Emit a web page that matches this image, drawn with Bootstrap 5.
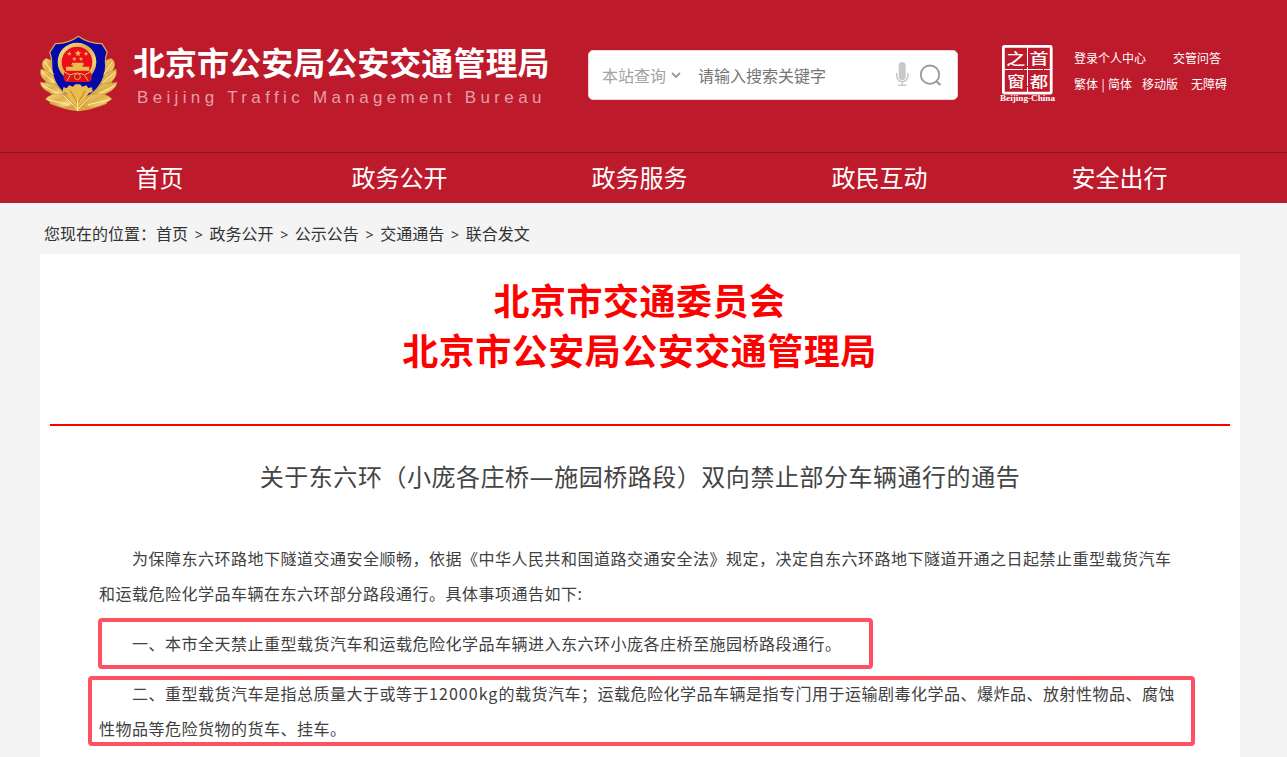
<!DOCTYPE html>
<html lang="zh-CN">
<head>
<meta charset="utf-8">
<meta name="viewport" content="width=device-width, initial-scale=1">
<title>北京市公安局公安交通管理局</title>
<link href="https://cdn.jsdelivr.net/npm/bootstrap@5.3.0/dist/css/bootstrap.min.css" rel="stylesheet">
<style>
  html, body { height: 100%; }
  body { background: #f4f4f4; color: #333; font-family: "Noto Sans CJK SC", sans-serif; font-size: 16px; overflow: hidden; padding-right: 7px; }
  a { color: inherit; text-decoration: none; }
  .page-width { width: 1200px; margin: 0 auto; }
  .site-top { background: #bd1a2c; margin-right: -7px; padding-right: 7px; height: 152px; }
  .site-nav { background: #bd1a2c; margin-right: -7px; padding-right: 7px; height: 51px; border-top: 1px solid #8f1220; }
  .site-nav a { flex: 0 0 240px; font-size: 24px; line-height: 48px; color: #fff; text-align: center; padding-right: 1px; }
  .emblem { margin-top: 35px; }
  .brand-text { margin: 38px 0 0 13px; width: 455px; color: #fff; white-space: nowrap; }
  .brand-text h1 { font-size: 32px; font-weight: 700; line-height: 47px; margin: 0 0 3px; letter-spacing: .04px; }
  .brand-text p { font: 17px/20px "Liberation Sans", Arial, sans-serif; letter-spacing: 4.35px; color: #e3a0a8; margin: 0 0 0 4px; }
  .search-box { width: 370px; height: 50px; margin-top: 50px; border-radius: 5px; border: 1px solid #e6d5d7; }
  .search-kind { color: #a3a3a3; margin-left: 13px; }
  .search-hint { color: #757575; margin-left: 16px; width: 197px; }
  .seal { margin: 44px 0 0 41px; }
  .tools { margin: 45px 0 0 18px; font-size: 12px; line-height: 26px; color: #fff; white-space: nowrap; }
  .crumbs { height: 51px; padding: 5px 0 0 4px; line-height: 51px; white-space: nowrap; }
  .crumbs i { font: 14px "Noto Sans", sans-serif; display: inline-block; width: 21.4px; text-align: center; }
  .sheet { height: 520px; padding: 20px 10px 0; }
  .issuer { color: #f00; font-size: 36px; font-weight: 700; line-height: 50px; letter-spacing: .5px; height: 152px; border-bottom: 2px solid #f00; text-align: center; margin: 0; padding-right: 1px; }
  .notice-title { color: #444; font-size: 24px; line-height: 36px; letter-spacing: .53px; text-align: center; margin: 32px 0 47px; height: 36px; }
  .notice-title .dash { font-family: "DejaVu Sans", sans-serif; }
  .notice { color: #404040; padding-left: 49px; line-height: 35px; letter-spacing: .5px; white-space: nowrap; }
  .notice p { margin: 0 0 15px; text-indent: 33px; position: relative; }
  .notice .latin { letter-spacing: 1.05px; }
  .outlined::before { content: ""; position: absolute; border: 4px solid #ff5162; border-radius: 4px; }
  .outline-one::before { left: -1px; top: -8px; width: 775px; height: 51px; }
  .outline-two::before { left: -11px; top: 0; width: 1107px; height: 70px; }
</style>
</head>
<body>
<header class="site-top">
  <div class="page-width d-flex align-items-start">
    <svg class="emblem flex-shrink-0" width="80" height="78" viewBox="31 30 240 234" aria-label="警徽">
      <defs>
        <linearGradient id="gold" x1="0" y1="0" x2="1" y2="1"><stop offset="0" stop-color="#f8df8c"/><stop offset=".45" stop-color="#dfad48"/><stop offset=".75" stop-color="#f3d67c"/><stop offset="1" stop-color="#c78c32"/></linearGradient>
      </defs>
      <path d="M54 112L74 110L146 200L219 110L240 112L248 170L226 205L232 236Q188 254 146 259Q104 254 60 236L66 205L46 170Z" fill="#dba845"/>
      <g fill="url(#gold)" stroke="#b98332" stroke-width="1.2">
        <path d="M50 100Q32 110 40 128Q52 150 74 158L64 106Z"/>
        <path d="M34 132Q28 152 46 167L82 184L68 146Z"/>
        <path d="M31 172Q36 194 66 206L108 214L78 178Z"/>
        <path d="M47 222Q66 201 103 209L136 245Q90 255 47 222Z"/>
        <path d="M244 100Q260 110 253 128Q242 150 220 158L230 106Z"/>
        <path d="M259 132Q265 152 248 167L212 184L226 146Z"/>
        <path d="M263 172Q258 194 228 206L186 214L216 178Z"/>
        <path d="M247 222Q228 201 191 209L158 245Q204 255 247 222Z"/>
      </g>
      <path d="M146 34Q116 57 77 56L60 82Q67 98 66 121C67 160 80 186 106 206L146 232L186 206C212 186 227 160 228 121Q225 98 233 82L217 56Q178 57 146 34Z" fill="#0609a8" stroke="#d9ad58" stroke-width="3.5"/>
      <circle cx="142" cy="111" r="52" fill="#ec0c1c" stroke="url(#gold)" stroke-width="12"/>
      <g fill="#e9bd4c">
        <path id="st" d="M145 75l3 7h7l-6 5 2 7-6-4-6 4 2-7-6-5h7z"/>
        <path id="sm" d="M119 79l2 5h5l-4 3 1 5-4-3-4 3 1-5-4-3h5z"/>
        <use href="#sm" x="50"/><use href="#sm" x="15" y="16"/><use href="#sm" x="35" y="16"/>
        <path d="M128 113h32l4 6h-5v6h20v12h-70v-12h20v-6h-5z"/>
      </g>
      <path d="M104 139q38 8 78 0l5 18q-2 10-8 14h-70q-7-5-8-14z" fill="#dd1020"/>
      <path d="M101 139l20 11q22-11 44 0l19-11M121 152l-9 15m54-15l9 15" fill="none" stroke="#efbe52" stroke-width="3"/>
      <circle cx="143" cy="155" r="9" fill="#dd1020" stroke="#e8ab43" stroke-width="3"/>
      <path d="M101 187l11 2 6-8 12 4 7-7h14l7 7 12-4 6 8 11-2 2 13-12 5-14 23-20 14-20-14-13-23-11-5z" fill="#e9bc50"/>
      <path d="M122 197l22 38 23-38" fill="none" stroke="#b77e25" stroke-width="3"/>
      <path d="M45 110l27 38M38 142l38 31M37 181l49 25M53 224l66 15M249 110l-27 38M256 142l-38 31M257 181l-49 25M241 224l-66 15M102 212l42 41 42-41M144 224v34" fill="none" stroke="#fff1a5" stroke-width="3"/>
    </svg>
    <div class="brand-text flex-shrink-0">
      <h1>北京市公安局公安交通管理局</h1>
      <p>Beijing Traffic Management Bureau</p>
    </div>
    <div class="search-box bg-white d-flex align-items-center flex-shrink-0">
      <span class="search-kind">本站查询</span>
      <svg class="ms-1" width="12" height="10" viewBox="0 0 12 10"><path d="M2 3l4 4 4-4" fill="none" stroke="#999" stroke-width="1.8"/></svg>
      <span class="search-hint">请输入搜索关键字</span>
      <svg width="14" height="26" viewBox="0 0 14 26"><rect x="3.7" y="0" width="7" height="18" rx="3.5" fill="#c8c8c8"/><path d="M1.7 11v3a5.6 5.6 0 0 0 11.2 0v-3M7.3 20v3M3 23.2h8.5" fill="none" stroke="#c8c8c8" stroke-width="1.5"/></svg>
      <svg class="ms-2" width="25" height="24" viewBox="0 0 25 24"><circle cx="13" cy="11.7" r="9.2" fill="none" stroke="#999" stroke-width="1.8"/><path d="M19 18l4.5 4" stroke="#999" stroke-width="2.2"/></svg>
    </div>
    <svg class="seal flex-shrink-0" width="57" height="60" viewBox="0 0 57 60" fill="#fff">
      <rect x="4.4" y="2.4" width="47.8" height="46.8" rx="1" fill="none" stroke="#fff" stroke-width="2.8"/>
      <path d="M28.5 3v46M5 25.5h47" stroke="#fff" stroke-width="1" stroke-dasharray="19 1"/>
      <g font-family="Noto Sans CJK SC, sans-serif" font-size="18" font-weight="500" text-anchor="middle">
        <text transform="translate(16.8 20) scale(1.06 .8)">之</text><text transform="translate(40 20) scale(1.06 .8)">首</text>
        <text transform="translate(17 42.5) scale(.98 .8)">窗</text><text transform="translate(40 42.5) scale(1.02 .8)">都</text>
      </g>
      <text x="28.5" y="57.2" text-anchor="middle" font-family="Liberation Serif, serif" font-weight="700" font-size="7.4" textLength="55" lengthAdjust="spacingAndGlyphs">Beijing-China</text>
    </svg>
    <div class="tools">
      <div><a href="#">登录个人中心</a><a href="#" style="margin-left:27px">交管问答</a></div>
      <div><a href="#">繁体</a><span class="d-inline-block text-center" style="width:10px">|</span><a href="#">简体</a><a href="#" style="margin-left:10px">移动版</a><a href="#" style="margin-left:13px">无障碍</a></div>
    </div>
  </div>
</header>
<nav class="site-nav">
  <div class="page-width d-flex">
    <a href="#">首页</a><a href="#">政务公开</a><a href="#">政务服务</a><a href="#">政民互动</a><a href="#">安全出行</a>
  </div>
</nav>
<main class="page-width">
  <div class="crumbs">您现在的位置：<a href="#">首页</a><i>&gt;</i><a href="#">政务公开</a><i>&gt;</i><a href="#">公示公告</a><i>&gt;</i><a href="#">交通通告</a><i>&gt;</i><a href="#">联合发文</a></div>
  <article class="sheet bg-white">
    <h2 class="issuer">北京市交通委员会<br>北京市公安局公安交通管理局</h2>
    <h3 class="notice-title fw-normal">关于东六环（小庞各庄桥<span class="dash">—</span>施园桥路段）双向禁止部分车辆通行的通告</h3>
    <div class="notice">
      <p>为保障东六环路地下隧道交通安全顺畅，依据《中华人民共和国道路交通安全法》规定，决定自东六环路地下隧道开通之日起禁止重型载货汽车<br>和运载危险化学品车辆在东六环部分路段通行。具体事项通告如下:</p>
      <p class="outlined outline-one">一、本市全天禁止重型载货汽车和运载危险化学品车辆进入东六环小庞各庄桥至施园桥路段通行。</p>
      <p class="outlined outline-two">二、重型载货汽车是指总质量大于或等于<span class="latin">12000kg</span>的载货汽车；运载危险化学品车辆是指专门用于运输剧毒化学品、爆炸品、放射性物品、腐蚀<br>性物品等危险货物的货车、挂车。</p>
    </div>
  </article>
</main>
<script src="https://cdn.jsdelivr.net/npm/bootstrap@5.3.0/dist/js/bootstrap.bundle.min.js"></script>
</body>
</html>
